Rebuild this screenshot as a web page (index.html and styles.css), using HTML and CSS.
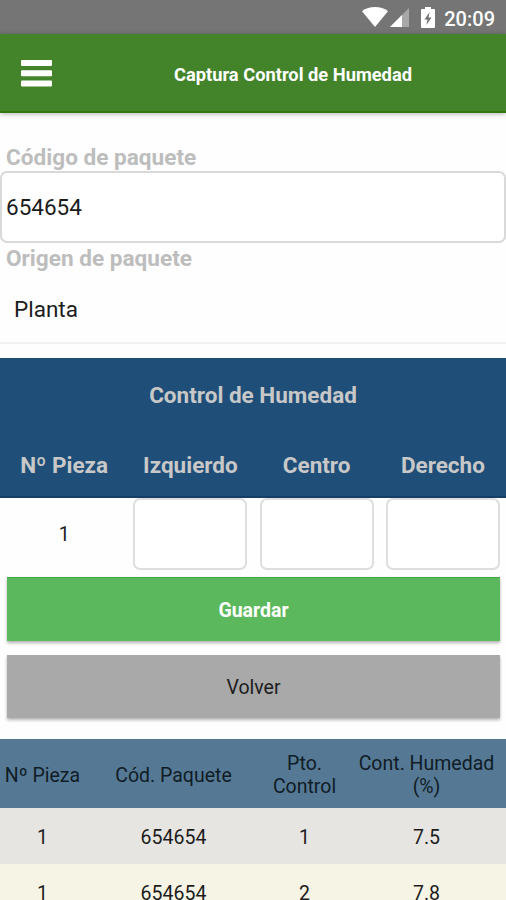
FILE: index.html
```html
<!DOCTYPE html>
<html lang="es">

<head>
  <meta charset="UTF-8">
  <title>Captura Control de Humedad</title>
  <link rel="stylesheet" href="styles.css">
</head>

<body>
  <div class="statusbar">
    <svg class="wifi" width="26" height="20" viewBox="0 0 26 20">
      <path d="M0 4.2C7-1.4 19-1.4 26 4.2L13 20z" fill="#fff" />
    </svg>
    <svg class="signal" width="19" height="19" viewBox="0 0 19 19">
      <path d="M19 0V19H0z" fill="#a8a8a8" />
      <path d="M12 7V19H0z" fill="#fff" />
    </svg>
    <svg class="battery" width="14" height="21" viewBox="0 0 14 21">
      <path d="M4 0h6v2h3q1 0 1 1v17q0 1-1 1H1q-1 0-1-1V3q0-1 1-1h3z" fill="#fff" />
      <path d="M8.6 5L3.4 12.4h3L5.4 18l5.2-7.6H7.5z" fill="#757575" />
    </svg>
    <span class="clock">20:09</span>
  </div>

  <header class="topbar">
    <button class="menu" type="button" aria-label="Menu">
      <svg width="31" height="27" viewBox="0 0 31 27">
        <rect y="0" width="31" height="6" rx="1" fill="#fff" />
        <rect y="10.3" width="31" height="6" rx="1" fill="#fff" />
        <rect y="20.6" width="31" height="6" rx="1" fill="#fff" />
      </svg>
    </button>
    <h1>Captura Control de Humedad</h1>
  </header>

  <form class="package">
    <label for="codigo">Código de paquete</label>
    <input id="codigo" class="box" type="text" value="654654">
    <label class="origin-label">Origen de paquete</label>
    <div class="origin">Planta</div>
  </form>

  <section class="capture">
    <div class="capture-head">
      <h2>Control de Humedad</h2>
      <div class="cols names">
        <span>Nº Pieza</span>
        <span>Izquierdo</span>
        <span>Centro</span>
        <span>Derecho</span>
      </div>
    </div>
    <div class="cols values">
      <span>1</span>
      <input class="box" type="text" aria-label="Izquierdo">
      <input class="box" type="text" aria-label="Centro">
      <input class="box" type="text" aria-label="Derecho">
    </div>
  </section>

  <div class="buttons">
    <button class="btn save" type="button">Guardar</button>
    <button class="btn back" type="button">Volver</button>
  </div>

  <table class="results">
    <thead>
      <tr>
        <th class="c-piece">Nº Pieza</th>
        <th class="c-code">Cód. Paquete</th>
        <th class="c-point">Pto.<br>Control</th>
        <th class="c-hum">Cont. Humedad<br>(%)</th>
      </tr>
    </thead>
    <tbody>
      <tr>
        <td>1</td>
        <td>654654</td>
        <td>1</td>
        <td>7.5</td>
      </tr>
      <tr>
        <td>1</td>
        <td>654654</td>
        <td>2</td>
        <td>7.8</td>
      </tr>
    </tbody>
  </table>
</body>

</html>
```
FILE: styles.css
```css
* {
  box-sizing: border-box;
}

body {
  margin: 0;
  height: 900px;
  overflow: hidden;
  background-color: #fefefe;
  color: #1c1c1c;
  font-family: Roboto, sans-serif;
  font-size: 19.5px;
}

h1,
h2 {
  margin: 0;
}

.statusbar {
  display: flex;
  align-items: center;
  justify-content: flex-end;
  height: 34px;
  padding-right: 11px;
  background-color: #757575;
  color: #fff;
}

.signal {
  margin: 1px 12px 0 2px;
}

.battery {
  margin-right: 9px;
}

.clock {
  font-size: 20px;
  font-weight: 500;
  line-height: 34px;
  padding-top: 3px;
}

.topbar {
  display: flex;
  align-items: center;
  height: 79px;
  background-color: #43842b;
  border-bottom: 2px solid #34790f;
  box-shadow: 0 1px 5px rgba(0, 0, 0, 0.3);
}

.menu {
  display: flex;
  margin: 0;
  padding: 2px 0 0 21px;
  border: none;
  background: none;
}

.topbar h1 {
  flex: 1;
  padding: 4px 0 0 28px;
  color: #fff;
  font-size: 18.3px;
  text-align: center;
}

.package {
  padding-top: 30px;
}

.package label {
  display: block;
  height: 28px;
  padding-left: 6px;
  color: #bdbdbd;
  font-size: 22.6px;
  font-weight: bold;
  line-height: 29px;
}

.package .origin-label {
  line-height: 32px;
}

.box {
  display: block;
  width: 100%;
  height: 72px;
  padding: 0 4px;
  border: 2px solid #d9d9d9;
  border-radius: 7px;
  background-color: #fff;
  color: #1c1c1c;
  font: 22.5px Roboto, sans-serif;
}

.origin {
  height: 73px;
  padding-left: 14px;
  border-bottom: 2px solid #f1f1f1;
  font-size: 22.5px;
  line-height: 77px;
}

.capture {
  margin-top: 14px;
}

.capture-head {
  height: 140px;
  background-color: #1f4e78;
  border-bottom: 2px solid #143f6b;
  color: #c8c8c8;
  font-size: 22.5px;
  font-weight: bold;
  text-align: center;
}

.capture-head h2 {
  font-size: 22.5px;
  line-height: 74px;
}

.cols {
  display: grid;
  grid-template-columns: repeat(4, 1fr);
  padding-left: 1px;
  text-align: center;
}

.names {
  line-height: 67px;
}

.values {
  line-height: 73px;
}

.values .box {
  width: 114px;
  height: 72px;
  margin: 0 auto;
  border-color: #dedede;
}

.buttons {
  display: flex;
  flex-direction: column;
  gap: 14px;
  padding: 6px 6px 21px 7px;
}

.btn {
  height: 63.5px;
  padding: 2px 0 0;
  border: none;
  box-shadow: 0 2px 3px rgba(0, 0, 0, 0.3);
  font: 19.5px Roboto, sans-serif;
}

.save {
  background-color: #5cb85c;
  border-top: 1px solid #3fa646;
  color: #fff;
  font-weight: bold;
}

.back {
  background-color: #a9a9a9;
  color: #1c1c1c;
}

.results {
  width: 100%;
  table-layout: fixed;
  border-collapse: collapse;
  text-align: center;
}

.results th {
  height: 69px;
  padding: 3px 0 0;
  background-color: #557994;
  color: #101c26;
  font-weight: normal;
  line-height: 23px;
}

.results td {
  height: 56px;
  padding: 2px 0 0;
  background-color: #e6e5e1;
}

.results tr:nth-child(even) td {
  background-color: #f6f5e5;
}

.c-piece,
.c-point {
  width: 85px;
}

.c-code {
  width: 177px;
}
```
